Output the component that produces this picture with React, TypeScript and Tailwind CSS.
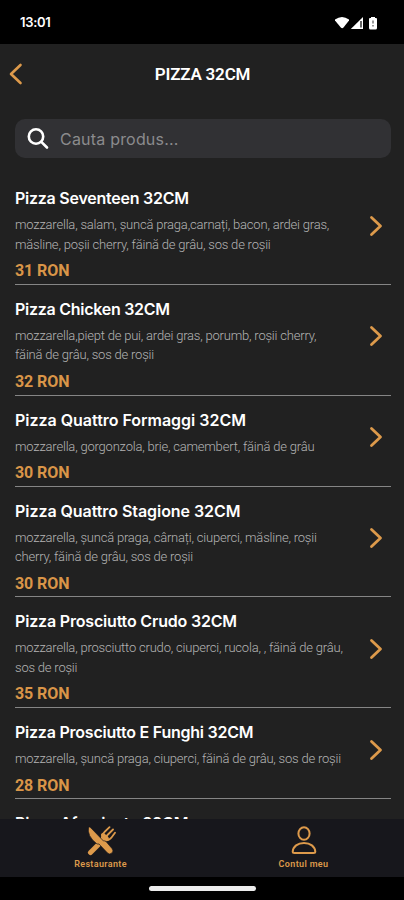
import React, { useState } from "react";

type Product = {
  name: string;
  nameClass: string;
  lines: string[];
  price: number;
};

const PRODUCTS: Product[] = [
  {
    name: "Pizza Seventeen 32CM",
    nameClass: "tracking-[-0.25px]",
    lines: ["mozzarella, salam, șuncă praga,carnați, bacon, ardei gras,", "măsline, poșii cherry, făină de grâu, sos de roșii"],
    price: 31,
  },
  {
    name: "Pizza Chicken 32CM",
    nameClass: "tracking-[-0.27px]",
    lines: ["mozzarella,piept de pui, ardei gras, porumb, roșii cherry,", "făină de grâu, sos de roșii"],
    price: 32,
  },
  {
    name: "Pizza Quattro Formaggi 32CM",
    nameClass: "tracking-[-0.02px]",
    lines: ["mozzarella, gorgonzola, brie, camembert, făină de grâu"],
    price: 30,
  },
  {
    name: "Pizza Quattro Stagione 32CM",
    nameClass: "tracking-[-0.06px]",
    lines: ["mozzarella, șuncă praga, cârnați, ciuperci, măsline, roșii", "cherry, făină de grâu, sos de roșii"],
    price: 30,
  },
  {
    name: "Pizza Prosciutto Crudo 32CM",
    nameClass: "tracking-[-0.18px]",
    lines: ["mozzarella, prosciutto crudo, ciuperci, rucola, , făină de grâu,", "sos de roșii"],
    price: 35,
  },
  {
    name: "Pizza Prosciutto E Funghi 32CM",
    nameClass: "tracking-[-0.23px]",
    lines: ["mozzarella, șuncă praga, ciuperci, făină de grâu, sos de roșii"],
    price: 28,
  },
];

function StatusBar() {
  return (
    <div className="flex h-11 shrink-0 items-center justify-between bg-black pl-5 pr-[25px] pt-0.5">
      <span className="text-[13px] font-semibold tracking-[-0.3px] text-white">13:01</span>
      <svg className="h-[14px] w-[44px]" viewBox="0 0 44 14" fill="#fff">
        <path d="M0 3.500Q7 -1.500 14 3.500V4.500L8.500 11.500Q7.200 12.800 5.800 11.500L0 4.500Z" />
        <path d="M28 1V13H15.800Z" />
        <path d="M26 5V11.500" stroke="#000" strokeWidth="1.200" />
        <path d="M36 1h4v1h1q1 0 1 1v9q0 1.500-1.500 1.500h-5Q34 13.500 34 12V3q0-1 1-1h1z" />
        <path d="M38 4.500v3M38 9v1.500" stroke="#555" strokeWidth="1.200" />
      </svg>
    </div>
  );
}

function Header() {
  return (
    <header className="flex h-[60px] shrink-0 items-center pl-[9px] pr-[29px]">
      <button aria-label="Back" className="shrink-0">
        <svg className="h-[22px] w-[15px]" viewBox="0 0 15 22" fill="none" stroke="#dd9a4b" strokeWidth="2.6" strokeLinecap="round" strokeLinejoin="round">
          <path d="M11.500 2L2 11L11.500 20" />
        </svg>
      </button>
      <h1 className="flex-1 pl-1.5 pt-px text-center font-[Roboto] text-[17px] font-semibold tracking-[-0.2px] text-white">PIZZA 32CM</h1>
    </header>
  );
}

function SearchBar() {
  const [query, setQuery] = useState("");
  return (
    <div className="ml-[15px] mr-[13px] mt-[15px] flex h-[39px] shrink-0 items-center rounded-[10px] bg-[#313134] pl-3">
      <svg className="h-[22px] w-[22px] shrink-0" viewBox="0 0 22 22" fill="none" stroke="#fff" strokeWidth="2.6" strokeLinecap="round">
        <circle cx="9" cy="8.500" r="7.200" />
        <path d="M14.300 13.800L20 19.500" />
      </svg>
      <input
        value={query}
        onChange={(e) => setQuery(e.target.value)}
        placeholder="Cauta produs..."
        className="ml-[11px] min-w-0 flex-1 bg-transparent text-base tracking-[0.2px] text-white outline-none placeholder:text-[#8b8b8d]"
      />
    </div>
  );
}

function ProductRow({ product }: { product: Product }) {
  return (
    <li className="flex shrink-0 items-center border-b border-[#858585] pb-[2.6px] pt-[14px]">
      <div className="min-w-0 flex-1">
        <h2 className={`h-5 whitespace-nowrap text-base font-semibold leading-5 text-white ${product.nameClass}`}>{product.name}</h2>
        <div className="mt-[7px] font-[Roboto] text-[13px] font-light leading-[19.4px] tracking-[-0.2px] text-[#b4b4b4]">
          {product.lines.map((line) => (
            <p key={line} className="whitespace-nowrap">{line}</p>
          ))}
        </div>
        <p className="mt-[7.2px] h-5 font-[Roboto] text-base font-bold leading-5 tracking-[-0.1px] text-[#d99548]">{product.price} RON</p>
      </div>
      <svg className="mb-[18px] mr-2 h-[22px] w-[14px] shrink-0" viewBox="0 0 14 22" fill="none" stroke="#dd9a4b" strokeWidth="2.800" strokeLinecap="round" strokeLinejoin="round">
        <path d="M2.500 2.500L11.500 11L2.500 19.500" />
      </svg>
    </li>
  );
}

function TabBar() {
  return (
    <nav className="flex h-[58px] shrink-0 bg-[#17171c] text-[#dd9a4b]">
      <button className="flex flex-1 flex-col items-center pt-[7px]">
        <svg className="h-[30px] w-[30px]" viewBox="0 0 30 30" fill="none" stroke="currentColor" strokeLinecap="round">
          <path d="M4.500 26.500L19.500 11.500" strokeWidth="5" />
          <path d="M16 14Q15 9 18.500 6L23.500 1.200M19.500 11L27 3.500M18 14Q23 15 25.500 11.500L29 6.800" strokeWidth="1.800" />
          <path d="M17 9L21 13" strokeWidth="4" />
          <path d="M2.500 1Q4 .5 5 2L17.500 15Q19 14.500 20 15.500L26 22.500Q28 25 26 27Q23.500 29 21.500 27L13 18L11 18Q.5 10 2.500 1Z" fill="currentColor" stroke="#17171c" strokeWidth=".7" />
        </svg>
        <span className="mt-0.5 font-[Roboto] text-[9px] font-semibold leading-3 tracking-[0.35px]">Restaurante</span>
      </button>
      <button className="flex flex-1 flex-col items-center pl-0.5 pt-[7px]">
        <svg className="h-[30px] w-[28px]" viewBox="0 0 28 30" fill="none" stroke="currentColor" strokeWidth="2" strokeLinejoin="round">
          <ellipse cx="14" cy="7.500" rx="5.600" ry="6.300" />
          <path d="M2.700 25.500C3.200 20.500 7.500 17 14 17S24.800 20.500 25.300 25.500Q25.300 27 23.500 27H4.500Q2.700 27 2.700 25.500Z" />
        </svg>
        <span className="mt-0.5 font-[Roboto] text-[9px] font-semibold leading-3 tracking-[0.35px]">Contul meu</span>
      </button>
    </nav>
  );
}

export default function App() {
  return (
    <div className="flex h-[900px] w-[404px] flex-col overflow-hidden bg-[#212121] font-[Inter]">
      <StatusBar />
      <Header />
      <SearchBar />
      <ul className="ml-[15px] mr-[13px] mt-[16.4px] flex min-h-0 flex-1 flex-col overflow-hidden">
        {PRODUCTS.map((product) => (
          <ProductRow key={product.name} product={product} />
        ))}
        <li className="shrink-0 pt-[14px]">
          <h2 className="h-5 whitespace-nowrap text-base font-semibold leading-5 tracking-[-0.15px] text-white">Pizza Afumicata 32CM</h2>
        </li>
      </ul>
      <TabBar />
      <div className="flex h-[23px] shrink-0 items-center justify-center bg-black">
        <div className="h-[5px] w-[107px] rounded-full bg-[#ececec]" />
      </div>
    </div>
  );
}
